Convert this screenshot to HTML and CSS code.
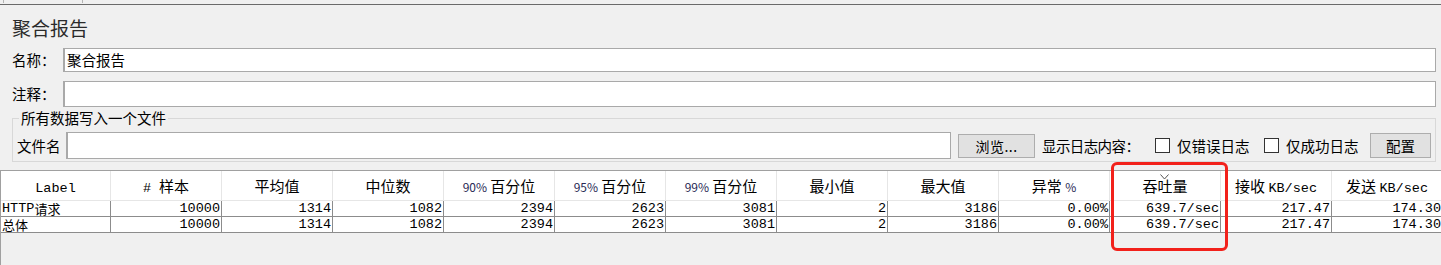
FILE: index.html
```html
<!DOCTYPE html>
<html lang="zh-CN">
<head>
    <meta charset="UTF-8">
    <title>聚合报告</title>
    <link rel="stylesheet" href="styles.css">
</head>
<body>

    <div class="topbar">
        <span class="tick tick-a"></span>
        <span class="tick tick-b"></span>
    </div>

    <div class="panel">
        <div class="title">聚合报告</div>

        <div class="row row-name">
            <label class="field-label">名称：</label>
            <div class="input">聚合报告</div>
        </div>

        <div class="row row-note">
            <label class="field-label">注释：</label>
            <div class="input"></div>
        </div>

        <fieldset class="group">
            <legend>所有数据写入一个文件</legend>
            <div class="file-row">
                <span class="file-label">文件名</span>
                <div class="input file-input"></div>
                <button class="btn btn-browse">浏览...</button>
                <span class="log-label">显示日志内容：</span>
                <span class="check"></span>
                <span class="check-text">仅错误日志</span>
                <span class="check check-2"></span>
                <span class="check-text">仅成功日志</span>
                <button class="btn btn-config">配置</button>
            </div>
        </fieldset>
    </div>

    <div class="table-pane">
        <div class="grid head">
            <div class="th"><span class="m">Label</span></div>
            <div class="th"><span class="m"># </span>样本</div>
            <div class="th">平均值</div>
            <div class="th">中位数</div>
            <div class="th"><span class="pct">90%</span> 百分位</div>
            <div class="th"><span class="pct">95%</span> 百分位</div>
            <div class="th"><span class="pct">99%</span> 百分位</div>
            <div class="th">最小值</div>
            <div class="th">最大值</div>
            <div class="th">异常 <span class="pct">%</span></div>
            <div class="th sorted">
                <svg class="sort-arrow" width="9" height="6" viewBox="0 0 9 6"><path d="M0.5 0.5 L4.5 5 L8.5 0.5" fill="none" stroke="#555" stroke-width="1"/></svg>
                吞吐量
            </div>
            <div class="th">接收 <span class="m">KB/sec</span></div>
            <div class="th">发送 <span class="m">KB/sec</span></div>
        </div>

        <div class="grid data">
            <div class="td first">HTTP<span class="cjk">请求</span></div>
            <div class="td">10000</div>
            <div class="td">1314</div>
            <div class="td">1082</div>
            <div class="td">2394</div>
            <div class="td">2623</div>
            <div class="td">3081</div>
            <div class="td">2</div>
            <div class="td">3186</div>
            <div class="td">0.00%</div>
            <div class="td">639.7/sec</div>
            <div class="td">217.47</div>
            <div class="td">174.30</div>
        </div>

        <div class="grid data">
            <div class="td first"><span class="cjk">总体</span></div>
            <div class="td">10000</div>
            <div class="td">1314</div>
            <div class="td">1082</div>
            <div class="td">2394</div>
            <div class="td">2623</div>
            <div class="td">3081</div>
            <div class="td">2</div>
            <div class="td">3186</div>
            <div class="td">0.00%</div>
            <div class="td">639.7/sec</div>
            <div class="td">217.47</div>
            <div class="td">174.30</div>
        </div>
    </div>

    <!-- red highlight drawn over the throughput column -->
    <div class="highlight"></div>

</body>
</html>
```

FILE: styles.css
```css
body {
    margin: 0;
    background-color: #f0f0f0;
    font-family: "Noto Sans CJK SC", sans-serif;
    font-size: 14.5px;
    color: #000;
    position: relative;
    overflow: hidden;
    height: 265px;
}

.topbar {
    height: 4px;
    border-bottom: 1px solid #6a6a6a;
    position: relative;
}

.tick {
    position: absolute;
    top: 0;
    width: 1px;
    height: 3px;
    background-color: #b5b5b5;
}

.tick-a { left: 3px; }
.tick-b { left: 82px; }

.panel {
    padding: 0 5px 0 12px;
}

.title {
    margin-top: 8px;
    height: 30px;
    line-height: 30px;
    font-size: 19px;
    color: #2b2b2b;
}

.row {
    display: flex;
    align-items: center;
}

.row-name {
    margin-top: 5px;
    height: 24px;
}

.row-note {
    margin-top: 9px;
    height: 26px;
}

.field-label {
    width: 51px;
    line-height: 18px;
}

.input {
    flex: 1;
    height: 100%;
    box-sizing: border-box;
    background-color: #fff;
    border: 1px solid #a9a9a9;
    border-left-width: 2px;
    padding-left: 2px;
    font-size: 14.5px;
    line-height: 21px;
}

.group {
    margin: 3px 0 0 0;
    padding: 0 0 2px 4px;
    border: 1px solid #d8d8d8;
    min-width: 0;
}

.group legend {
    margin-left: 2px;
    padding: 0 2px;
    line-height: 16px;
}

.file-row {
    display: flex;
    align-items: center;
    height: 27px;
    margin-top: 6px;
}

.file-label {
    width: 49px;
}

.file-input {
    flex: none;
    width: 885px;
}

.btn {
    font-family: "Noto Sans CJK SC", sans-serif;
    font-size: 14px;
    background-color: #e1e1e1;
    border: 1px solid #adadad;
    padding: 0;
    color: #000;
}

.btn-browse {
    width: 77px;
    height: 24px;
    margin-left: 7px;
    letter-spacing: 0.5px;
}

.log-label {
    margin-left: 7px;
    width: 113px;
    letter-spacing: -0.6px;
}

.check {
    width: 15px;
    height: 15px;
    box-sizing: border-box;
    background-color: #fff;
    border: 1px solid #333;
    flex: none;
}

.check-2 {
    margin-left: 14px;
}

.check-text {
    margin-left: 7px;
    width: 73px;
}

.btn-config {
    width: 61px;
    height: 25px;
    margin-left: 11px;
    font-size: 14.5px;
}

/* results table */
.table-pane {
    margin-top: 8px;
    border-top: 1px solid #a0a0a0;
    border-left: 1px solid #a0a0a0;
    height: 100px;
    overflow: hidden;
    white-space: nowrap;
}

.grid {
    display: grid;
    grid-template-columns: 110px repeat(12, 111px);
    width: 1443px;
}

.th {
    position: relative;
    height: 29px;
    background-color: #fff;
    border-right: 1px solid #e6e6e6;
    border-bottom: 1px solid #e6e6e6;
    text-align: center;
    line-height: 30px;
    font-size: 15px;
    color: #000;
}

.m {
    font-family: "Liberation Mono", monospace;
    font-size: 13.5px;
}

.pct {
    font-family: "Noto Sans CJK SC", sans-serif;
    font-size: 12px;
    color: #2a2a55;
}

.sort-arrow {
    position: absolute;
    left: 50px;
    top: 3px;
}

.td {
    height: 15px;
    background-color: #fff;
    border-right: 1px solid #8c8c8c;
    border-bottom: 1px solid #8c8c8c;
    text-align: right;
    padding-right: 1px;
    font-family: "Liberation Mono", monospace;
    font-size: 13.5px;
    line-height: 15px;
}

.td.first {
    text-align: left;
    padding-left: 1px;
    padding-right: 0;
}

.cjk {
    font-family: "Noto Sans CJK SC", sans-serif;
    font-size: 13px;
    line-height: 15px;
    vertical-align: top;
}

.highlight {
    position: absolute;
    left: 1111px;
    top: 162px;
    width: 111px;
    height: 83px;
    border: 3px solid #f2211b;
    border-radius: 6px;
}
```
